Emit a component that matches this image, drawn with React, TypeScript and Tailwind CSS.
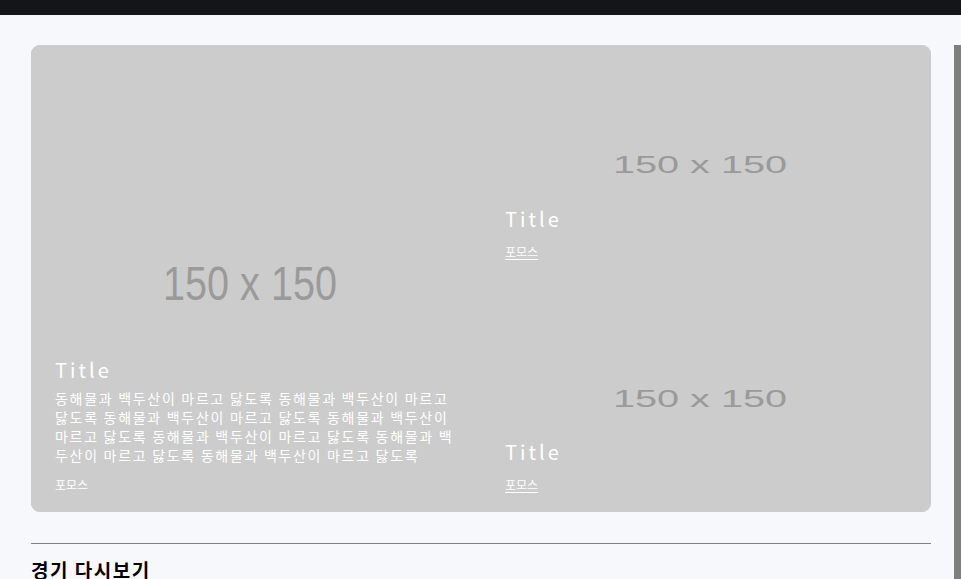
import React from 'react';

const desc =
  '동해물과 백두산이 마르고 닳도록 동해물과 백두산이 마르고 닳도록 동해물과 백두산이 마르고 닳도록 동해물과 백두산이 마르고 닳도록 동해물과 백두산이 마르고 닳도록 동해물과 백두산이 마르고 닳도록 동해물과 백두산이 마르고 닳도록';

const Placeholder: React.FC = () => (
  <svg
    className="absolute inset-0 w-full h-full"
    viewBox="0 0 150 150"
    preserveAspectRatio="none"
  >
    <rect width="150" height="150" fill="#cccccc" />
    <text
      x="73"
      y="82"
      textAnchor="middle"
      fontFamily="Liberation Sans, Arial, sans-serif"
      fontSize="15.3"
      fill="#9a9a9a"
      textLength="58"
      lengthAdjust="spacingAndGlyphs"
    >
      150 x 150
    </text>
  </svg>
);

interface SlideProps {
  title: string;
  text?: string;
  underline?: boolean;
  className?: string;
}

const Slide: React.FC<SlideProps> = ({ title, text, underline, className }) => (
  <div className={`relative overflow-hidden flex flex-col justify-end px-6 pb-[17px] ${className ?? ''}`}>
    <Placeholder />
    <div className="relative text-white">
      <h3 className="text-[20px] leading-[26px] tracking-[3px] font-normal">{title}</h3>
      {text && (
        <p className="mt-[6px] w-[404px] text-[14px] leading-[19px] tracking-[1.7px]">{text}</p>
      )}
      <a
        className={`inline-block mt-[12px] text-[12px] leading-[16px] ${
          underline ? 'underline underline-offset-2' : ''
        }`}
      >
        포모스
      </a>
    </div>
  </div>
);

export default function App() {
  return (
    <div
      className="relative h-[579px] bg-[#f7f8fc] overflow-hidden"
      style={{ fontFamily: '"Noto Sans CJK KR", "Noto Sans", sans-serif' }}
    >
      <div className="h-[15px] bg-[#141518]" />
      <div className="pt-[30px] pl-[31px]">
        <div className="w-[900px] h-[467px] rounded-[9px] overflow-hidden bg-[#cccccc] grid grid-cols-2 grid-rows-2">
          <Slide title="Title" text={desc} className="row-span-2" />
          <Slide title="Title" underline />
          <Slide title="Title" underline />
        </div>
      </div>
      <div className="absolute right-0 top-[45px] bottom-0 w-[7px] bg-[#7f7f7f]" />
      <div className="ml-[31px] w-[900px] mt-[31px] border-t border-[#808080]" />
      <h2 className="ml-[31px] mt-[14px] text-[19px] leading-[24px] font-bold tracking-[1.5px] text-black">
        경기 다시보기
      </h2>
    </div>
  );
}
